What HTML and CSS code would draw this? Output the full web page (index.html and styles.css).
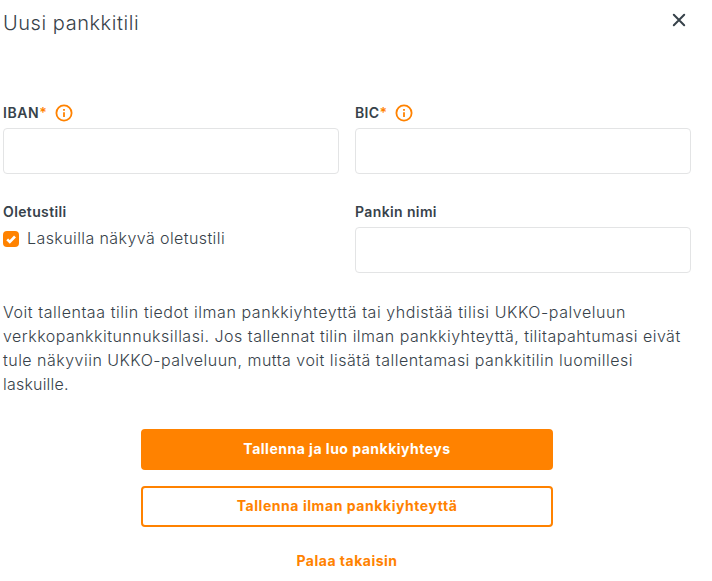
FILE: index.html
```html
<!DOCTYPE html>
<html lang="fi">
<head>
  <meta charset="UTF-8">
  <meta name="viewport" content="width=device-width, initial-scale=1">
  <title>Uusi pankkitili</title>
  <link rel="stylesheet" href="styles.css">
</head>
<body>

<form class="modal">
  <!-- Header -->
  <div class="modal-header">
    <h2>Uusi pankkitili</h2>
    <button type="button" class="close" aria-label="Sulje">
      <svg width="14" height="14" viewBox="0 0 14 14"><path d="M1.8 1.8L12.2 12.2M12.2 1.8L1.8 12.2"/></svg>
    </button>
  </div>

  <!-- Account fields -->
  <div class="fields">
    <div class="field">
      <label for="iban"><span class="iban">IBAN</span><span class="required">*</span>
        <svg class="info" width="18" height="18" viewBox="0 0 18 18"><circle cx="9" cy="9" r="7.6"/><path d="M9 8.2V13M9 5V6.8"/></svg>
      </label>
      <input type="text" id="iban">
    </div>
    <div class="field">
      <label for="bic"><span>BIC</span><span class="required">*</span>
        <svg class="info" width="18" height="18" viewBox="0 0 18 18"><circle cx="9" cy="9" r="7.6"/><path d="M9 8.2V13M9 5V6.8"/></svg>
      </label>
      <input type="text" id="bic">
    </div>
    <div class="field">
      <label><span>Oletustili</span></label>
      <div class="check">
        <span class="checkbox">
          <svg width="16" height="16" viewBox="0 0 16 16"><path d="M4.2 8.4L6.8 11L12 5.5"/></svg>
        </span>
        <span class="check-text">Laskuilla näkyvä oletustili</span>
      </div>
    </div>
    <div class="field">
      <label for="bank"><span>Pankin nimi</span></label>
      <input type="text" id="bank">
    </div>
  </div>

  <p class="text">
    <span class="first-line">Voit tallentaa tilin tiedot ilman pankkiyhteyttä tai yhdistää tilisi UKKO-palveluun</span><br>
    verkkopankkitunnuksillasi. Jos tallennat tilin ilman pankkiyhteyttä, tilitapahtumasi eivät<br>
    tule näkyviin UKKO-palveluun, mutta voit lisätä tallentamasi pankkitilin luomillesi<br>
    <span class="last-line">laskuille.</span>
  </p>

  <!-- Buttons -->
  <div class="buttons">
    <button type="button" class="btn btn-primary">Tallenna ja luo pankkiyhteys</button>
    <button type="button" class="btn btn-outline">Tallenna ilman pankkiyhteyttä</button>
    <button type="button" class="btn btn-link">Palaa takaisin</button>
  </div>
</form>

</body>
</html>
```

FILE: styles.css
```css
* {
  box-sizing: border-box;
}

body {
  margin: 0;
  background: #fff;
  color: #37424a;
  font-family: Inter, "Liberation Sans", sans-serif;
  font-size: 16px;
  overflow: hidden;
}

.modal {
  padding: 8px 21px 0 3px;
}

.modal-header {
  display: flex;
  justify-content: space-between;
  height: 93px;
}

h2 {
  margin: 0;
  font-size: 20px;
  line-height: 30px;
  font-weight: 300;
  letter-spacing: 0.55px;
}

.close {
  width: 14px;
  height: 14px;
  margin: 5px 5px 0 0;
  padding: 0;
  border: none;
  background: none;
  cursor: pointer;
}

.close svg {
  display: block;
  fill: none;
  stroke: #37424a;
  stroke-width: 2;
  stroke-linecap: round;
}

.fields {
  display: grid;
  grid-template-columns: 336px 336px;
  column-gap: 16px;
  row-gap: 26px;
}

label {
  display: flex;
  align-items: center;
  height: 24px;
  margin-bottom: 3px;
  font-size: 14px;
  font-weight: 600;
  letter-spacing: 0.38px;
}

label span {
  padding-bottom: 2px;
}

.iban {
  letter-spacing: 0.6px;
}

.required {
  color: #ff8200;
  letter-spacing: 0;
}

.info {
  margin-left: 8px;
  fill: none;
  stroke: #ff8200;
  stroke-width: 1.8;
}

input {
  display: block;
  width: 336px;
  height: 46px;
  padding: 10px;
  border: 1px solid #e3e4e5;
  border-radius: 4px;
  font-size: 16px;
}

.check {
  display: flex;
  align-items: center;
  height: 24px;
  font-weight: 300;
}

.checkbox {
  width: 16px;
  height: 16px;
  margin-right: 8px;
  border-radius: 4px;
  background: #ff8200;
}

.checkbox svg {
  display: block;
  fill: none;
  stroke: #fff;
  stroke-width: 2.6;
}

.check-text {
  padding-bottom: 2px;
  letter-spacing: 0.41px;
}

.text {
  margin: 27px 0 33px;
  line-height: 24px;
  font-weight: 300;
  letter-spacing: 0.48px;
  white-space: nowrap;
}

.first-line {
  letter-spacing: 0.56px;
}

.last-line {
  letter-spacing: 0.2px;
}

.buttons {
  display: flex;
  flex-direction: column;
  align-items: center;
}

.btn {
  width: 412px;
  height: 41px;
  margin-bottom: 16px;
  padding: 0 0 2px;
  border: 2px solid #ff8200;
  border-radius: 4px;
  background: #fff;
  color: #ff8200;
  font-family: inherit;
  font-size: 14px;
  font-weight: 700;
  letter-spacing: 0.5px;
  cursor: pointer;
}

.btn-outline {
  letter-spacing: 0.56px;
}

.btn-primary {
  background: #ff8200;
  color: #fff;
}

.btn-link {
  height: 36px;
  border: none;
}
```
